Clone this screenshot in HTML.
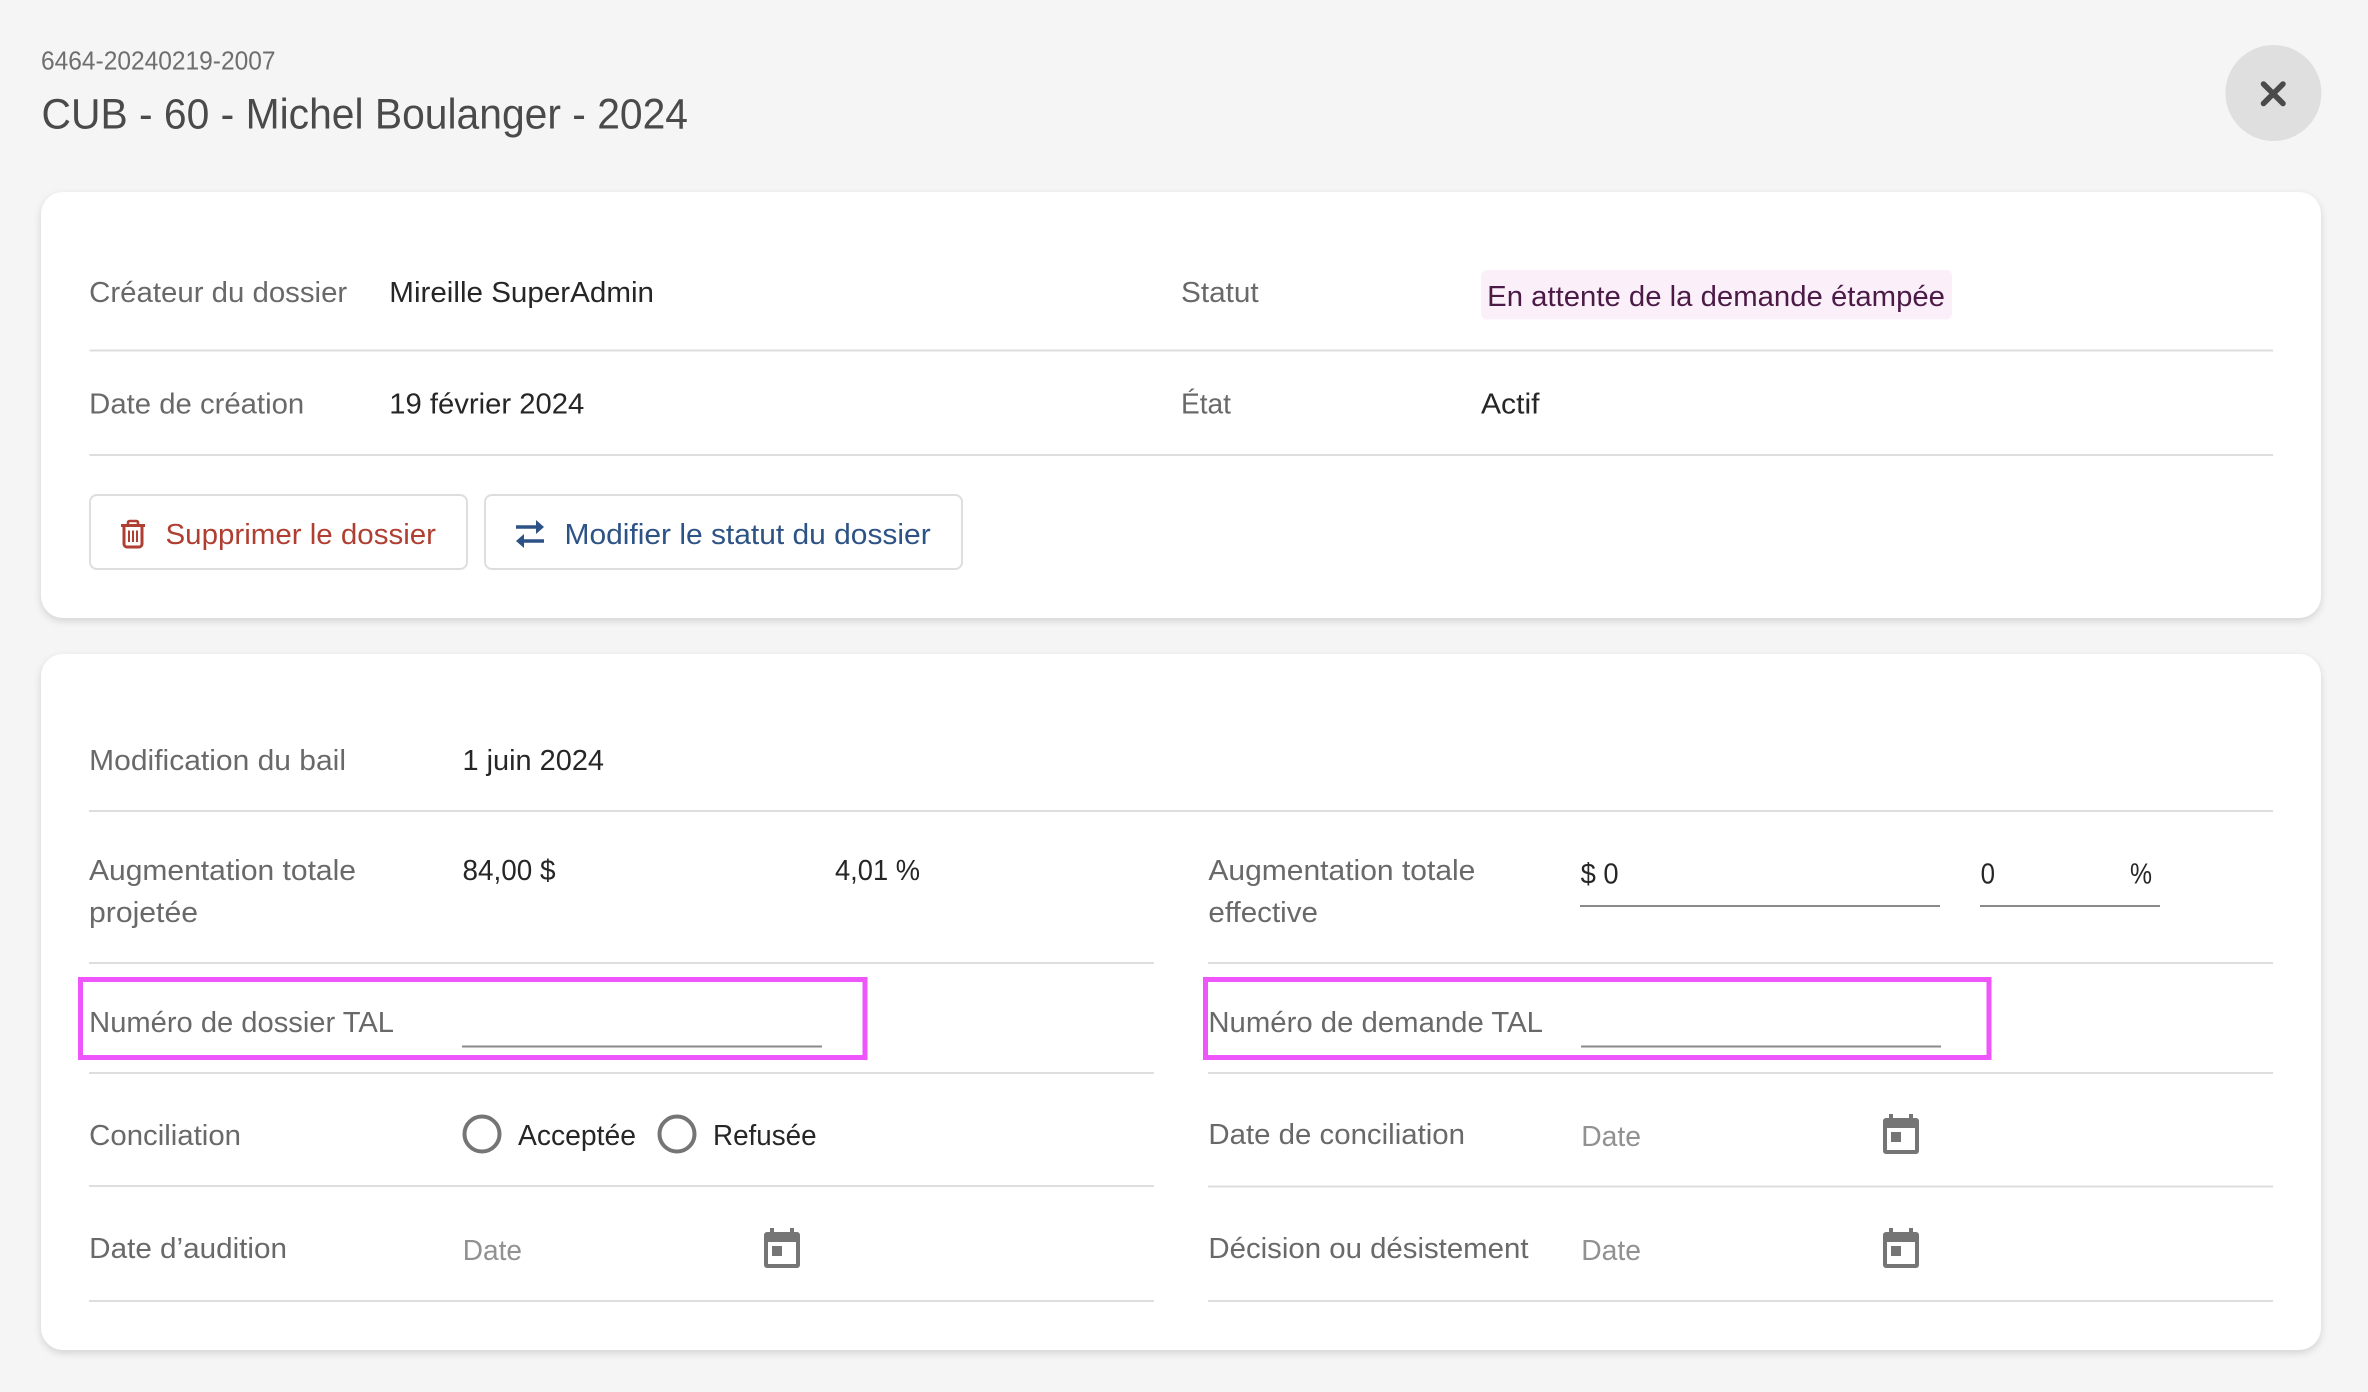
<!DOCTYPE html>
<html lang="fr">
<head>
<meta charset="utf-8">
<title>CUB - 60 - Michel Boulanger - 2024</title>
<style>
html,body{margin:0;padding:0;width:2368px;height:1392px;overflow:hidden;background:#f5f5f5;}
.card{position:absolute;background:#fff;border-radius:22px;box-shadow:0 3px 8px rgba(0,0,0,.14);}
svg{position:absolute;left:0;top:0;}
text{font-family:"Liberation Sans",sans-serif;font-size:29px;}
.l{fill:#696969;}
.v{fill:#262626;}
.p{fill:#919191;}
</style>
</head>
<body>
<div class="card" style="left:41px;top:192px;width:2280px;height:426px;"></div>
<div class="card" style="left:41px;top:654px;width:2280px;height:696px;"></div>
<svg width="2368" height="1392" viewBox="0 0 2368 1392" xmlns="http://www.w3.org/2000/svg">
<defs>
<g id="cal" fill="#757575">
<rect x="6" y="0" width="4" height="6"/>
<rect x="26" y="0" width="4" height="6"/>
<path fill-rule="evenodd" d="M3 4H33a3 3 0 0 1 3 3V37a3 3 0 0 1-3 3H3a3 3 0 0 1-3-3V7a3 3 0 0 1 3-3ZM4 14V36H32V14ZM8 18H18V28H8Z"/>
</g>
</defs>

<!-- header -->
<text x="41" y="69.5" textLength="234.5" lengthAdjust="spacingAndGlyphs" style="font-size:25.5px;fill:#6e6e6e">6464-20240219-2007</text>
<text x="41.5" y="128.5" textLength="646.5" lengthAdjust="spacingAndGlyphs" style="font-size:43px;fill:#4a4a4a">CUB - 60 - Michel Boulanger - 2024</text>
<circle cx="2273.4" cy="93" r="48" fill="#dfdfdf"/>
<path d="M2263.5 84L2283 103.5M2283 84L2263.5 103.5" stroke="#4a4a4a" stroke-width="5.5" stroke-linecap="round" fill="none"/>

<!-- card 1 -->
<text class="l" x="89.2" y="301.8" textLength="258" lengthAdjust="spacingAndGlyphs">Créateur du dossier</text>
<text class="v" x="389.3" y="301.8" textLength="264.7" lengthAdjust="spacingAndGlyphs">Mireille SuperAdmin</text>
<text class="l" x="1181" y="301.8" textLength="77.7" lengthAdjust="spacingAndGlyphs">Statut</text>
<rect x="1481" y="270" width="471" height="49.5" rx="6" fill="#fbf0f9"/>
<text x="1487.2" y="306" textLength="457.8" lengthAdjust="spacingAndGlyphs" style="fill:#4b1a47">En attente de la demande étampée</text>
<rect x="89.5" y="349.5" width="2183.5" height="2" fill="#dedede"/>

<text class="l" x="89.2" y="413.5" textLength="215" lengthAdjust="spacingAndGlyphs">Date de création</text>
<text class="v" x="389.3" y="413.5" textLength="195" lengthAdjust="spacingAndGlyphs">19 février 2024</text>
<text class="l" x="1181" y="413.5" textLength="50" lengthAdjust="spacingAndGlyphs">État</text>
<text class="v" x="1481" y="413.5" textLength="58.5" lengthAdjust="spacingAndGlyphs">Actif</text>
<rect x="89.5" y="454" width="2183.5" height="2" fill="#dedede"/>

<!-- buttons -->
<rect x="90" y="495" width="377" height="74" rx="7" fill="#fff" stroke="#dedede" stroke-width="2"/>
<rect x="485" y="495" width="477" height="74" rx="7" fill="#fff" stroke="#dedede" stroke-width="2"/>
<g fill="none" stroke="#b03f33">
<path d="M121 525.5H145" stroke-width="3"/>
<path d="M128 525V522.5a1.5 1.5 0 0 1 1.5-1.5H136.5a1.5 1.5 0 0 1 1.5 1.5V525" stroke-width="2.6"/>
<path d="M124 526V544a3 3 0 0 0 3 3H139a3 3 0 0 0 3-3V526" stroke-width="3"/>
<path d="M129 530.5V542M133 530.5V542M137 530.5V542" stroke-width="2"/>
</g>
<text x="165.5" y="544" textLength="270.5" lengthAdjust="spacingAndGlyphs" style="fill:#b03f33">Supprimer le dossier</text>
<g fill="#2d5285">
<path d="M516 525.3H536V520L544 527L536 534V528.7H516Z"/>
<path d="M544 539.3H524V534L516 541L524 548V542.7H544Z"/>
</g>
<text x="564.5" y="544" textLength="366.2" lengthAdjust="spacingAndGlyphs" style="fill:#2d5285">Modifier le statut du dossier</text>

<!-- card 2 -->
<text class="l" x="89.2" y="770" textLength="256.8" lengthAdjust="spacingAndGlyphs">Modification du bail</text>
<text class="v" x="462.5" y="770" textLength="141.5" lengthAdjust="spacingAndGlyphs">1 juin 2024</text>
<rect x="89" y="810" width="2184" height="2" fill="#dedede"/>

<text class="l" x="89" y="879.8" textLength="267" lengthAdjust="spacingAndGlyphs">Augmentation totale</text>
<text class="l" x="89" y="922" textLength="109" lengthAdjust="spacingAndGlyphs">projetée</text>
<text class="v" x="462.5" y="879.8" textLength="93" lengthAdjust="spacingAndGlyphs">84,00 $</text>
<text class="v" x="835" y="879.8" textLength="85" lengthAdjust="spacingAndGlyphs">4,01 %</text>
<text class="l" x="1208.4" y="879.8" textLength="267" lengthAdjust="spacingAndGlyphs">Augmentation totale</text>
<text class="l" x="1208.4" y="922" textLength="109.6" lengthAdjust="spacingAndGlyphs">effective</text>
<text class="v" x="1580.6" y="883.3" textLength="38" lengthAdjust="spacingAndGlyphs">$ 0</text>
<rect x="1580" y="905" width="360" height="2" fill="#8a8a8a"/>
<text class="v" x="1980.6" y="883.3" textLength="14.4" lengthAdjust="spacingAndGlyphs">0</text>
<text class="v" x="2130" y="883.3" textLength="22" lengthAdjust="spacingAndGlyphs">%</text>
<rect x="1980" y="905" width="180" height="2" fill="#8a8a8a"/>
<rect x="89" y="962" width="1065" height="2" fill="#dedede"/>
<rect x="1208" y="962" width="1065" height="2" fill="#dedede"/>

<rect x="80.5" y="979.5" width="784.5" height="78" fill="none" stroke="#ee55fa" stroke-width="5"/>
<rect x="1205.5" y="979.5" width="783.5" height="78" fill="none" stroke="#ee55fa" stroke-width="5"/>
<text class="l" x="89.2" y="1032" textLength="304.8" lengthAdjust="spacingAndGlyphs">Numéro de dossier TAL</text>
<rect x="462" y="1045.5" width="360" height="2" fill="#8a8a8a"/>
<text class="l" x="1208.4" y="1032" textLength="334.6" lengthAdjust="spacingAndGlyphs">Numéro de demande TAL</text>
<rect x="1581" y="1045.5" width="360" height="2" fill="#8a8a8a"/>
<rect x="89" y="1072" width="1065" height="2" fill="#dedede"/>
<rect x="1208" y="1072" width="1065" height="2" fill="#dedede"/>

<text class="l" x="89.2" y="1145" textLength="151.8" lengthAdjust="spacingAndGlyphs">Conciliation</text>
<circle cx="482" cy="1134" r="17.5" fill="none" stroke="#757575" stroke-width="4"/>
<text class="v" x="518" y="1145" textLength="118" lengthAdjust="spacingAndGlyphs">Acceptée</text>
<circle cx="677" cy="1134" r="17.5" fill="none" stroke="#757575" stroke-width="4"/>
<text class="v" x="713" y="1145" textLength="103.6" lengthAdjust="spacingAndGlyphs">Refusée</text>
<text class="l" x="1208.4" y="1144" textLength="256.6" lengthAdjust="spacingAndGlyphs">Date de conciliation</text>
<text class="p" x="1581.2" y="1146" textLength="59.8" lengthAdjust="spacingAndGlyphs">Date</text>
<use href="#cal" x="1883" y="1114"/>
<rect x="89" y="1185" width="1065" height="2" fill="#dedede"/>
<rect x="1208" y="1185.5" width="1065" height="2" fill="#dedede"/>

<text class="l" x="89.2" y="1258" textLength="197.8" lengthAdjust="spacingAndGlyphs">Date d’audition</text>
<text class="p" x="462.8" y="1260" textLength="59.2" lengthAdjust="spacingAndGlyphs">Date</text>
<use href="#cal" x="764" y="1228"/>
<text class="l" x="1208.4" y="1258" textLength="320.1" lengthAdjust="spacingAndGlyphs">Décision ou désistement</text>
<text class="p" x="1581.2" y="1260" textLength="59.8" lengthAdjust="spacingAndGlyphs">Date</text>
<use href="#cal" x="1883" y="1228"/>
<rect x="89" y="1300" width="1065" height="2" fill="#dedede"/>
<rect x="1208" y="1300" width="1065" height="2" fill="#dedede"/>
</svg>
</body>
</html>
